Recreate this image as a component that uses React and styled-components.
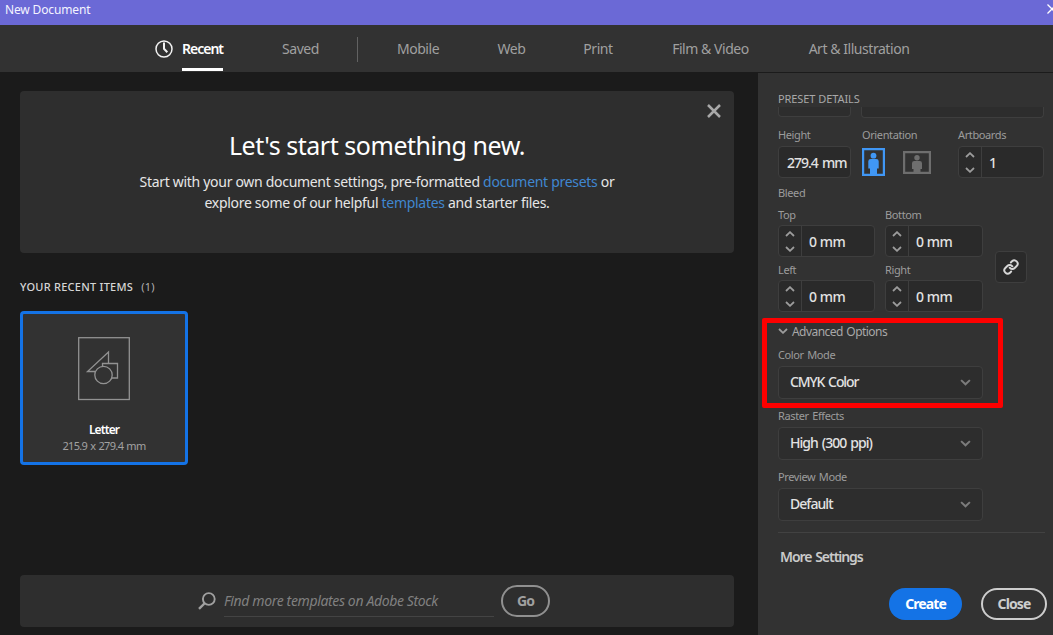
import React from "react";
import styled, { createGlobalStyle } from "styled-components";

const tabs = [
  { label: "Recent", width: 41, active: true },
  { label: "Saved", width: 37 },
  { divider: true },
  { label: "Mobile", width: 42 },
  { label: "Web", width: 27 },
  { label: "Print", width: 28 },
  { label: "Film & Video", width: 79 },
  { label: "Art & Illustration", width: 100 },
];

const Chevron = ({ up, size = 10, color = "#9c9c9c" }) => (
  <svg width={size} height={size * 0.6} viewBox="0 0 10 6" fill="none" stroke={color} strokeWidth="1.8">
    <path d={up ? "M1 5 5 1.2 9 5" : "M1 1 5 4.8 9 1"} />
  </svg>
);

const PersonIcon = ({ landscape }) =>
  landscape ? (
    <svg width="28" height="23" viewBox="0 0 28 23" fill="#6e6e6e">
      <path fillRule="evenodd" d="M0 0H28V23H0ZM2.2 2.2V20.8H25.8V2.2Z" />
      <circle cx="14" cy="6.8" r="2.7" />
      <path d="M11.3 10H16.7Q19 10 19 12.3V18H17.5V21H10.5V18H9V12.3Q9 10 11.3 10Z" />
    </svg>
  ) : (
    <svg width="23" height="28" viewBox="0 0 23 28" fill="#4097f5">
      <path fillRule="evenodd" d="M0 0H23V28H0ZM2.2 2.2V25.8H20.8V2.2Z" />
      <circle cx="11.5" cy="7.7" r="2.9" />
      <path d="M8.8 11H14.2Q16.7 11 16.7 13.3V20.500H15V26H8V20.500H6.300V13.300Q6.300 11 8.800 11Z" />
    </svg>
  );

function Stepper({ label, value, width }) {
  return (
    <Field $width={width}>
      <Label>{label}</Label>
      <StepperBox>
        <Arrows>
          <Chevron up />
          <Chevron />
        </Arrows>
        <StepperValue>{value}</StepperValue>
      </StepperBox>
    </Field>
  );
}

function Dropdown({ label, value, spacing }) {
  return (
    <DropdownField>
      <Label>{label}</Label>
      <Select>
        <SelectValue $spacing={spacing}>{value}</SelectValue>
        <Chevron size={11} color="#7c7c7c" />
      </Select>
    </DropdownField>
  );
}

function App() {
  return (
    <Dialog>
      <GlobalStyle />
      <TitleBar>
        New Document
        <svg width="10" height="10" viewBox="0 0 10 10" stroke="#fff" strokeWidth="1.3">
          <path d="M0.5 0.5 9.5 9.5M9.5 0.5 0.5 9.5" />
        </svg>
      </TitleBar>

      <TabBar>
        <svg width="18" height="18" viewBox="0 0 18 18" fill="none" stroke="#f2f2f2">
          <circle cx="9" cy="9" r="8" strokeWidth="1.5" />
          <path d="M9 2.5V8.8L12.3 12.2" strokeWidth="2" />
        </svg>
        {tabs.map((tab, i) =>
          tab.divider ? (
            <TabDivider key={i} />
          ) : (
            <Tab key={i} $width={tab.width} $active={tab.active}>
              {tab.label}
            </Tab>
          )
        )}
      </TabBar>

      <Body>
        <Main>
          <Hero>
            <HeroClose>
              <svg width="14" height="14" viewBox="0 0 14 14" stroke="#a8a8a8" strokeWidth="2.5">
                <path d="M1 1 13 13M13 1 1 13" />
              </svg>
            </HeroClose>
            <HeroTitle>Let's start something new.</HeroTitle>
            <HeroText>
              Start with your own document settings, pre-formatted <HeroLink>document presets</HeroLink> or
            </HeroText>
            <HeroText $second>
              explore some of our helpful <HeroLink>templates</HeroLink> and starter files.
            </HeroText>
          </Hero>

          <RecentTitle>
            YOUR RECENT ITEMS <Count>(1)</Count>
          </RecentTitle>
          <Card>
            <svg width="52" height="64" viewBox="0 0 52 64" fill="none" stroke="#929292" strokeWidth="1.3">
              <rect x="0.7" y="0.7" width="50.6" height="61.8" />
              <path d="M17.5 34.5H9.5L30.5 15V26.5" />
              <path d="M24.5 30V26.5H39.5V41H34" />
              <circle cx="25.5" cy="38" r="8.7" />
            </svg>
            <CardName>Letter</CardName>
            <CardSize>215.9 x 279.4 mm</CardSize>
          </Card>

          <SearchBar>
            <svg width="18" height="18" viewBox="0 0 18 18" fill="none" stroke="#a0a0a0" strokeWidth="1.9">
              <circle cx="10.8" cy="7" r="5.9" />
              <path d="M6.8 11.2 1 16.8" strokeWidth="2.3" />
            </svg>
            <SearchInput>Find more templates on Adobe Stock</SearchInput>
            <GoButton>Go</GoButton>
          </SearchBar>
        </Main>

        <Panel>
          <PanelTitle>PRESET DETAILS</PanelTitle>
          <CutRow>
            <CutField $width={73} $height={10} />
            <CutField $width={183} $height={11} />
          </CutRow>

          <SizeRow>
            <Field $width={73}>
              <Label>Height</Label>
              <TextBox>279.4 mm</TextBox>
            </Field>
            <Field $width={86}>
              <Label>Orientation</Label>
              <Orientation>
                <PersonIcon />
                <PersonIcon landscape />
              </Orientation>
            </Field>
            <Stepper label="Artboards" value="1" width={86} />
          </SizeRow>

          <BleedLabel>Bleed</BleedLabel>
          <BleedRow>
            <BleedGrid>
              <Stepper label="Top" value="0 mm" width={97} />
              <Stepper label="Bottom" value="0 mm" width={98} />
              <Stepper label="Left" value="0 mm" width={97} />
              <Stepper label="Right" value="0 mm" width={98} />
            </BleedGrid>
            <LinkButton>
              <svg width="16" height="16" viewBox="0 0 24 24" fill="none" stroke="#d8d8d8" strokeWidth="2.9" strokeLinecap="round">
                <path d="M10 13a5 5 0 0 0 7.54.54l3-3a5 5 0 0 0-7.07-7.07l-1.72 1.71" />
                <path d="M14 11a5 5 0 0 0-7.54-.54l-3 3a5 5 0 0 0 7.07 7.07l1.71-1.71" />
              </svg>
            </LinkButton>
          </BleedRow>

          <Advanced>
            <Highlight />
            <AdvancedToggle>
              <Chevron />
              Advanced Options
            </AdvancedToggle>
            <Dropdown label="Color Mode" value="CMYK Color" spacing="-1.1px" />
          </Advanced>
          <Dropdown label="Raster Effects" value="High (300 ppi)" />
          <Dropdown label="Preview Mode" value="Default" />

          <Rule />
          <MoreSettings>More Settings</MoreSettings>
          <Actions>
            <CreateButton>Create</CreateButton>
            <CloseButton>Close</CloseButton>
          </Actions>
        </Panel>
      </Body>
    </Dialog>
  );
}

export default App;

const GlobalStyle = createGlobalStyle`
  * {
    box-sizing: border-box;
  }

  body {
    margin: 0;
    overflow: hidden;
    background: #1b1b1b;
    font-family: "Noto Sans", "Open Sans", sans-serif;
  }

  svg {
    display: block;
    flex-shrink: 0;
  }
`;

const Dialog = styled.div`
  width: 1053px;
  height: 635px;
  display: flex;
  flex-direction: column;
  overflow: hidden;
  white-space: nowrap;
`;

const TitleBar = styled.div`
  height: 25px;
  flex-shrink: 0;
  display: flex;
  justify-content: space-between;
  padding: 1px 0 0 5px;
  background: #6b69d6;
  color: #f4f4ff;
  font-size: 12px;
  line-height: 17px;
  letter-spacing: -0.15px;

  svg {
    margin: 3px -4px 0 0;
  }
`;

const TabBar = styled.div`
  height: 48px;
  flex-shrink: 0;
  display: flex;
  align-items: flex-start;
  padding-left: 155px;
  background: #323232;
  border-bottom: 1px solid #1b1b1b;

  > svg {
    margin: 15px 9px 0 0;
  }
`;

const Tab = styled.div`
  width: ${({ $width }) => $width}px;
  height: 46px;
  margin-right: ${({ $width }) => ($width === 37 ? 38 : 59)}px;
  display: flex;
  justify-content: center;
  font-size: 14px;
  line-height: 48px;
  letter-spacing: ${({ $active }) => ($active ? "-1px" : "-0.45px")};
  font-weight: ${({ $active }) => ($active ? 600 : 400)};
  color: ${({ $active }) => ($active ? "#fff" : "#a0a0a0")};
  border-bottom: ${({ $active }) => ($active ? "3px solid #fff" : "none")};
`;

const TabDivider = styled.div`
  width: 1px;
  height: 25px;
  margin: 12px 39px 0 0;
  background: #626262;
`;

const Body = styled.div`
  flex: 1;
  display: flex;
  min-height: 0;
`;

const Main = styled.div`
  width: 758px;
  display: flex;
  flex-direction: column;
  padding: 18px 24px 8px 20px;
  background: #1b1b1b;
`;

const Hero = styled.div`
  position: relative;
  height: 162px;
  padding-top: 35px;
  background: #2e2e2e;
  border-radius: 4px;
  text-align: center;
`;

const HeroClose = styled.div`
  position: absolute;
  top: 13px;
  right: 13px;
`;

const HeroTitle = styled.div`
  color: #fff;
  font-size: 25px;
  line-height: 38px;
  letter-spacing: -0.46px;
`;

const HeroText = styled.div`
  color: #e6e6e6;
  font-size: 14px;
  line-height: 21px;
  letter-spacing: -0.3px;
  margin-top: ${({ $second }) => ($second ? 0 : 7)}px;
`;

const HeroLink = styled.span`
  color: #4087d0;
`;

const RecentTitle = styled.div`
  margin-top: 26px;
  color: #d6d6d6;
  font-size: 11px;
  line-height: 16px;
  font-weight: 500;
  letter-spacing: 0.25px;
`;

const Count = styled.span`
  margin-left: 5px;
  color: #b0b0b0;
  font-weight: 400;
`;

const Card = styled.div`
  width: 168px;
  height: 154px;
  margin-top: 16px;
  display: flex;
  flex-direction: column;
  align-items: center;
  padding-top: 23px;
  background: #323232;
  border: 3px solid #1473e6;
  border-radius: 4px;
`;

const CardName = styled.div`
  margin-top: 20px;
  color: #fff;
  font-size: 12px;
  line-height: 17px;
  font-weight: 600;
  letter-spacing: -0.9px;
`;

const CardSize = styled.div`
  color: #a2a2a2;
  font-size: 11px;
  line-height: 16px;
  letter-spacing: -0.65px;
  word-spacing: 0.8px;
`;

const SearchBar = styled.div`
  height: 52px;
  margin-top: auto;
  display: flex;
  align-items: center;
  padding-left: 178px;
  background: #2e2e2e;
  border-radius: 4px;
`;

const SearchInput = styled.div`
  width: 270px;
  height: 32px;
  margin-left: 8px;
  color: #808080;
  border-bottom: 1px solid #444;
  font-size: 14px;
  font-style: italic;
  line-height: 31px;
  letter-spacing: -0.36px;
`;

const Pill = styled.div`
  height: 32px;
  display: flex;
  align-items: center;
  justify-content: center;
  border: 2px solid transparent;
  border-radius: 16px;
  font-size: 14px;
  line-height: 20px;
  font-weight: 700;
  letter-spacing: -0.9px;
`;

const GoButton = styled(Pill)`
  width: 49px;
  margin-left: 7px;
  color: #a0a0a0;
  border-color: #909090;
`;

const Panel = styled.div`
  flex: 1;
  display: flex;
  flex-direction: column;
  padding: 18px 6px 0 20px;
  background: #323232;
`;

const PanelTitle = styled.div`
  color: #a8a8a8;
  font-size: 11px;
  line-height: 16px;
  letter-spacing: -0.08px;
`;

const CutRow = styled.div`
  height: 11px;
  display: flex;
  gap: 10px;
`;

const CutField = styled.div`
  width: ${({ $width }) => $width}px;
  height: ${({ $height }) => $height}px;
  background: #2d2d2d;
  border: 1px solid #3e3e3e;
  border-top: none;
  border-radius: 0 0 4px 4px;
`;

const SizeRow = styled.div`
  display: flex;
  margin-top: 9px;

  > :nth-child(2) {
    margin: 0 10px 0 11px;
  }
`;

const Field = styled.div`
  width: ${({ $width }) => $width}px;
`;

const Label = styled.div`
  height: 19px;
  color: #9c9c9c;
  font-size: 11px;
  line-height: 16px;
  letter-spacing: -0.38px;
  word-spacing: 1px;
`;

const TextBox = styled.div`
  height: 32px;
  padding-left: 8px;
  background: #2a2a2a;
  border: 1px solid #3e3e3e;
  border-radius: 4px;
  color: #e2e2e2;
  font-size: 14px;
  line-height: 31px;
  font-weight: 500;
  letter-spacing: -1px;
  word-spacing: 1.5px;
`;

const StepperBox = styled.div`
  height: 32px;
  display: flex;
  align-items: center;
  background: #2a2a2a;
  border: 1px solid #3e3e3e;
  border-radius: 4px;
`;

const Arrows = styled.div`
  width: 23px;
  height: 30px;
  display: flex;
  flex-direction: column;
  align-items: center;
  justify-content: center;
  gap: 9px;
  border-right: 1px solid #3e3e3e;
`;

const Value = styled.div`
  color: #e2e2e2;
  font-size: 14px;
  font-weight: 500;
`;

const StepperValue = styled(Value)`
  padding: 1px 0 0 7px;
  line-height: 30px;
  letter-spacing: -0.45px;
`;

const SelectValue = styled(Value)`
  line-height: 28px;
  padding-bottom: 1px;
  letter-spacing: ${({ $spacing }) => $spacing || "-0.95px"};
  word-spacing: 1.2px;
`;

const Orientation = styled.div`
  display: flex;
  align-items: center;
  gap: 18px;
  padding-top: 2px;
`;

const BleedLabel = styled(Label)`
  margin-top: 7px;
  height: 16px;
`;

const BleedRow = styled.div`
  display: flex;
  margin-top: 6px;
`;

const BleedGrid = styled.div`
  display: grid;
  grid-template-columns: 97px 98px;
  column-gap: 10px;
  row-gap: 5px;

  ${Label} {
    height: 18px;
  }
`;

const LinkButton = styled.div`
  width: 32px;
  height: 32px;
  margin: 44px 0 0 12px;
  display: flex;
  align-items: center;
  justify-content: center;
  background: #2a2a2a;
  border: 1px solid #3e3e3e;
  border-radius: 4px;
`;

const Advanced = styled.div`
  position: relative;
  margin-top: 11px;
`;

const Highlight = styled.div`
  position: absolute;
  top: -5px;
  left: -16px;
  width: 241px;
  height: 90px;
  border: 5px solid #fe0000;
  border-radius: 2px;
`;

const AdvancedToggle = styled.div`
  height: 16px;
  display: flex;
  align-items: center;
  gap: 4px;
  color: #a8a8a8;
  font-size: 12px;
  letter-spacing: -0.55px;
  word-spacing: 1px;
`;

const DropdownField = styled.div`
  width: 205px;
  margin-top: 9px;

  ${Advanced} & {
    margin-top: 8px;
  }
`;

const Select = styled.div`
  height: 33px;
  display: flex;
  align-items: center;
  justify-content: space-between;
  padding: 0 11px;
  background: #2d2d2d;
  border: 1px solid #3e3e3e;
  border-radius: 4px;
`;

const Rule = styled.div`
  width: 267px;
  height: 1px;
  margin-top: 11px;
  background: #424242;
`;

const MoreSettings = styled.div`
  margin: 15px 0 0 2px;
  color: #cacaca;
  font-size: 14px;
  line-height: 18px;
  font-weight: 600;
  letter-spacing: -1.05px;
  word-spacing: 1.2px;
`;

const Actions = styled.div`
  display: flex;
  justify-content: flex-end;
  gap: 19px;
  margin-top: 22px;
`;

const CreateButton = styled(Pill)`
  width: 73px;
  background: #1473e6;
  color: #fff;
`;

const CloseButton = styled(Pill)`
  width: 66px;
  color: #cdcdcd;
  border-color: #cdcdcd;
`;
